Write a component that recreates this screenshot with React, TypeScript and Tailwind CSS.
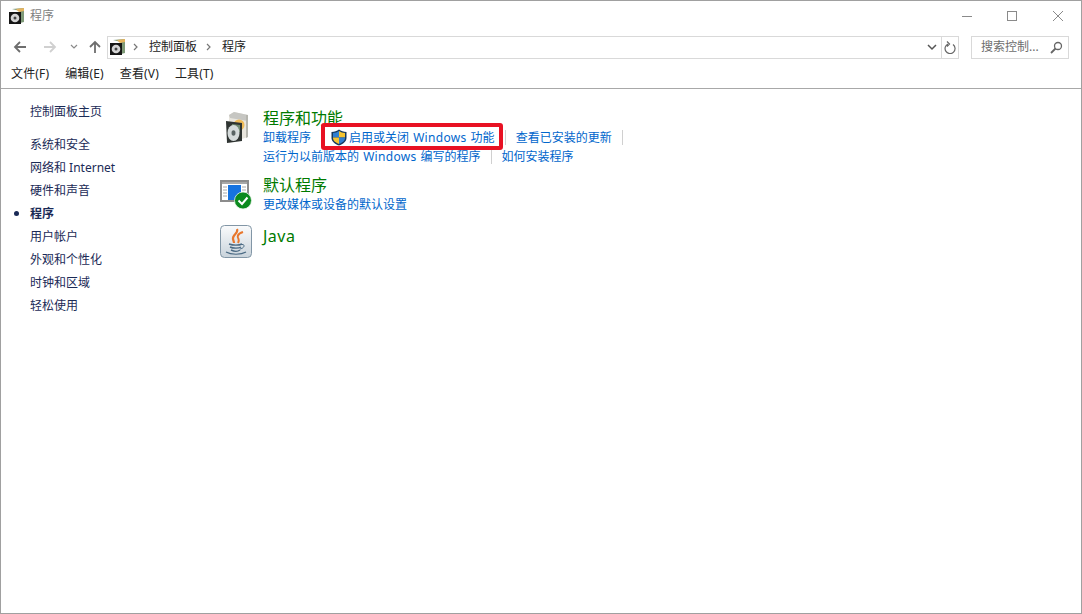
import React from "react";

const Disc = ({ s = 16 }: { s?: number }) => (
  <svg width={s} height={s} viewBox="0 0 16 16" className="shrink-0">
    <path d="M3 1 L15 0 V14 L11 15 V3 Z" fill="#7f9a78" />
    <path d="M7 1 L15 0 V3 L10 4 Z" fill="#e6b45e" />
    <rect x="0" y="4" width="12" height="12" fill="#151515" />
    <circle cx="6" cy="10" r="4.300" fill="#d4d4d4" />
    <circle cx="6" cy="10" r="1.500" fill="#444" />
  </svg>
);

const BigDisc = () => (
  <svg width="26" height="32" viewBox="0 0 26 32">
    <path d="M5 3 L10 0 L24 3 V25 L5 31 Z" fill="#e9e6de" />
    <path d="M5 3 L10 0 L24 3 V9 L6 6 Z" fill="#c6c6c2" />
    <path d="M22 3 L24 3 V25 L22 26 Z" fill="#b5b5ae" />
    <circle cx="15" cy="13" r="5.500" fill="#efbb58" />
    <path d="M2 9 L18 11 V29 L3 31 Z" fill="#2f3432" />
    <path d="M8 12 L16 13 V20 L8 18 Z" fill="#7f9f80" opacity=".8" />
    <ellipse cx="9.500" cy="21" rx="6" ry="8" fill="#d5dbdb" />
    <ellipse cx="9.500" cy="21" rx="2" ry="2.800" fill="#5a6464" />
  </svg>
);

const Shield = () => (
  <svg width="16" height="17" viewBox="0 0 16 17" className="shrink-0">
    <path d="M8 0.500 C10 2 12.500 2.800 15.500 3 V9 C15.500 12.500 12 15 8 16.500 C4 15 0.500 12.500 0.500 9 V3 C3.500 2.800 6 2 8 0.500 Z" fill="#15395f" />
    <path d="M8 2 V8.500 H2 V4 C4 3.900 6.300 3.200 8 2 Z" fill="#2f7fd0" />
    <path d="M8 2 C9.700 3.200 12 3.900 14 4 V8.500 H8 Z" fill="#f4c430" />
    <path d="M2 8.500 H8 V15 C5 13.800 2 12 2 9 Z" fill="#f4c430" />
    <path d="M8 8.500 H14 V9 C14 12 11 13.800 8 15 Z" fill="#2f7fd0" />
  </svg>
);

const DefaultIcon = () => (
  <svg width="32" height="30" viewBox="0 0 32 30">
    <rect x="1" y="1" width="27" height="20" fill="#fff" stroke="#8c8c8c" strokeWidth="2" />
    <rect x="2" y="2" width="25" height="2" fill="#a8a8a8" />
    <rect x="8" y="5" width="13" height="15" fill="#1673e0" />
    <path d="M3 7 H7 M3 10 H7 M3 13 H7 M3 16 H7 M22 7 H26 M22 10 H26 M22 13 H26" stroke="#a8a8a8" />
    <circle cx="23" cy="20.500" r="8.500" fill="#0b8a1e" stroke="#e8f4e8" strokeWidth="0.800" />
    <path d="M18.500 20.500 L22 24 L27.500 17.500" fill="none" stroke="#fff" strokeWidth="2" />
  </svg>
);

const JavaIcon = () => (
  <svg width="32" height="33" viewBox="0 0 32 33">
    <defs>
      <linearGradient id="jg" x1="0" y1="0" x2="0" y2="1">
        <stop offset="0" stopColor="#fafbfc" />
        <stop offset="1" stopColor="#c9d3db" />
      </linearGradient>
    </defs>
    <rect x="0.500" y="0.500" width="31" height="32" rx="4" fill="url(#jg)" stroke="#8296a6" />
    <path d="M17 4 C19 8 12 10 13 14 C13.500 16 14 17 14 18" fill="none" stroke="#e8772e" strokeWidth="2.200" />
    <path d="M23 7 C17 9 17 12 18.500 14 C19 15 19 16 18 18" fill="none" stroke="#e8772e" strokeWidth="2" />
    <path d="M9 19 C13 20.500 19 20.500 22 19 M10 22 C13 23.500 19 23.500 21 22 M11 25 C14 26.500 18 26.500 20 25" fill="none" stroke="#4a6a84" strokeWidth="1.400" />
    <path d="M6 27 C11 30 21 30 26 27" fill="none" stroke="#4a6a84" strokeWidth="1.200" />
    <path d="M22 19.500 C25 19 25 23 20 24" fill="none" stroke="#4a6a84" strokeWidth="1" />
  </svg>
);

const Sep = () => <span className="w-px h-[15px] bg-[#d0d0d0] shrink-0 mx-[10px]" />;
const A = ({ children }: { children: React.ReactNode }) => (
  <span className="text-[#0066cc] whitespace-pre">{children}</span>
);
const Lat = ({ children }: { children: React.ReactNode }) => (
  <span className="tracking-[0.3px] mx-[1px]">{children}</span>
);

const sideItems = ["系统和安全", "网络和 Internet", "硬件和声音", "程序", "用户帐户", "外观和个性化", "时钟和区域", "轻松使用"];

export default function App() {
  return (
    <div
      className="w-[1082px] h-[614px] bg-white border border-[#a0a0a0] overflow-hidden flex flex-col text-[12px] leading-[20px] text-[#1a1a1a] relative"
      style={{ fontFamily: '"Noto Sans", "Noto Sans CJK SC", sans-serif' }}
    >
      {/* title bar */}
      <div className="h-[29px] shrink-0 flex items-center pl-[8px]">
        <Disc />
        <span className="ml-[5px] text-[#808080]">程序</span>
        <div className="ml-auto flex items-center -mr-[1px]">
          <svg width="46" height="12" viewBox="0 0 46 12"><path d="M18 6.500 H28" stroke="#8a8a8a" /></svg>
          <svg width="46" height="12" viewBox="0 0 46 12"><rect x="17.500" y="1.500" width="9" height="9" fill="none" stroke="#8a8a8a" /></svg>
          <svg width="46" height="12" viewBox="0 0 46 12"><path d="M17 1 L27 11 M27 1 L17 11" stroke="#8a8a8a" /></svg>
        </div>
      </div>

      {/* nav row */}
      <div className="h-[24px] mt-[5px] shrink-0 flex items-center">
        <svg width="14" height="14" viewBox="0 0 14 14" className="ml-[12px]"><path d="M13 7 H2 M7 2 L2 7 L7 12" fill="none" stroke="#6e6e6e" strokeWidth="1.800" /></svg>
        <svg width="14" height="14" viewBox="0 0 14 14" className="ml-[16px]"><path d="M1 7 H12 M7 2 L12 7 L7 12" fill="none" stroke="#d0d0d0" strokeWidth="1.800" /></svg>
        <svg width="8" height="6" viewBox="0 0 8 6" className="ml-[13px]"><path d="M1 1 L4 4 L7 1" fill="none" stroke="#8a8a8a" strokeWidth="1.200" /></svg>
        <svg width="14" height="14" viewBox="0 0 14 14" className="ml-[10px]"><path d="M7 13 V2 M2 7 L7 2 L12 7" fill="none" stroke="#6e6e6e" strokeWidth="1.800" /></svg>
        <div className="ml-[5px] w-[852px] h-[23px] border border-[#d9d9d9] flex items-center">
          <span className="ml-[2px]"><Disc /></span>
          <svg width="6" height="8" viewBox="0 0 6 8" className="ml-[7px]"><path d="M1 1 L4 4 L1 7" fill="none" stroke="#777" strokeWidth="1.200" /></svg>
          <span className="ml-[10px] text-[#222]">控制面板</span>
          <svg width="6" height="8" viewBox="0 0 6 8" className="ml-[9px]"><path d="M1 1 L4 4 L1 7" fill="none" stroke="#777" strokeWidth="1.200" /></svg>
          <span className="ml-[10px] text-[#222]">程序</span>
          <svg width="10" height="7" viewBox="0 0 10 7" className="ml-auto mr-[4px]"><path d="M1 1 L5 5 L9 1" fill="none" stroke="#555" strokeWidth="1.500" /></svg>
          <div className="w-[17px] h-full border-l border-[#d9d9d9] flex items-center justify-center">
            <svg width="12" height="13" viewBox="0 0 12 13"><path d="M4 3 A5 5 0 1 0 9 3.500 M3 0.500 L5.500 3 L3 5.500" fill="none" stroke="#666" strokeWidth="1.200" /></svg>
          </div>
        </div>
        <div className="ml-[12px] w-[98px] h-[23px] border border-[#d9d9d9] flex items-center pl-[9px] text-[#6d6d6d]">
          <span>搜索控制...</span>
          <svg width="13" height="13" viewBox="0 0 13 13" className="ml-auto mr-[5px]"><circle cx="8" cy="5" r="3.500" fill="none" stroke="#666" strokeWidth="1.300" /><path d="M5.500 7.500 L1 12" stroke="#666" strokeWidth="1.800" /></svg>
        </div>
      </div>

      {/* menu */}
      <div className="h-[30px] shrink-0 flex items-center pl-[10px] gap-[16px] border-b border-[#a8a8a8] text-[#222] tracking-[0.15px]">
        <span>文件(F)</span>
        <span>编辑(E)</span>
        <span>查看(V)</span>
        <span>工具(T)</span>
      </div>

      {/* body */}
      <div className="flex flex-1 min-h-0">
        <div className="w-[219px] shrink-0 pl-[29px] pt-[11px] text-[#1a2a56]">
          <div className="h-[23px] leading-[23px] mb-[10px]">控制面板主页</div>
          {sideItems.map((t) => (
            <div key={t} className={`h-[23px] leading-[23px] relative whitespace-pre ${t === "程序" ? "font-bold" : ""}`}>
              {t === "程序" && <span className="absolute left-[-16px] top-[9px] w-[5px] h-[5px] rounded-full bg-[#1a2a56]" />}
              {t}
            </div>
          ))}
        </div>

        <div className="flex-1 pt-[18px]">
          <div className="flex h-[67px]">
            <div className="w-[43px] shrink-0 pl-[4px] pt-[5px]"><BigDisc /></div>
            <div>
              <div className="text-[16px] leading-[22px] text-[#007a00]">程序和功能</div>
              <div className="flex items-center h-[19px] mt-[-1px]">
                <A>卸载程序</A><Sep />
                <span className="-ml-[1px]"><Shield /></span><span className="w-[2px]" /><A>启用或关闭 <Lat>Windows</Lat> 功能</A><Sep />
                <A>查看已安装的更新</A><Sep />
              </div>
              <div className="flex items-center h-[19px]">
                <A>运行为以前版本的 <Lat>Windows</Lat> 编写的程序</A><Sep />
                <A>如何安装程序</A>
              </div>
            </div>
          </div>
          <div className="flex h-[51px]">
            <div className="w-[43px] shrink-0 pt-[6px]"><DefaultIcon /></div>
            <div>
              <div className="text-[16px] leading-[22px] text-[#007a00]">默认程序</div>
              <div className="h-[19px] flex items-center -mt-[1px]"><A>更改媒体或设备的默认设置</A></div>
            </div>
          </div>
          <div className="flex">
            <div className="w-[43px] shrink-0"><JavaIcon /></div>
            <div className="text-[16px] leading-[22px] text-[#007a00] tracking-[0.5px]">Java</div>
          </div>
        </div>
      </div>

      {/* red annotation */}
      <div className="absolute left-[320px] top-[122px] w-[182px] h-[27px] border-[4px] border-[#e81123] rounded-[3px]" />
    </div>
  );
}
